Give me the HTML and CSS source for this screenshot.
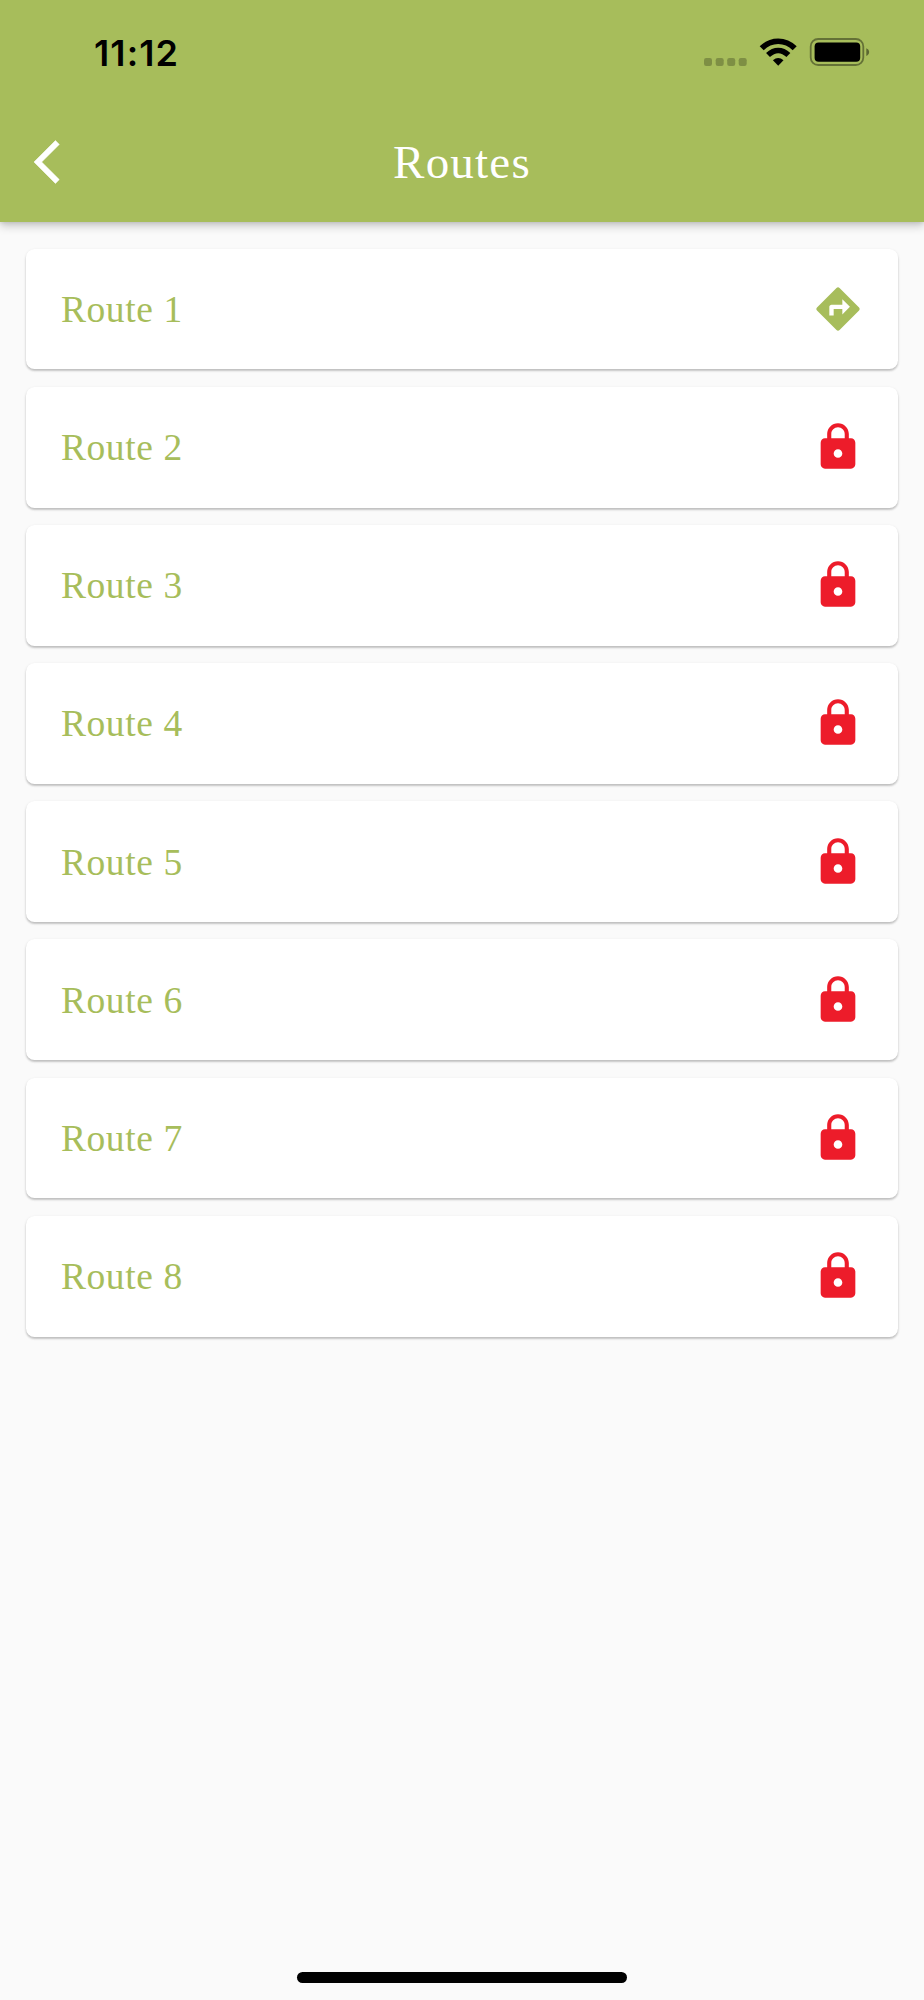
FILE: index.html
```html
<!DOCTYPE html>
<html lang="en">
<head>
<meta charset="utf-8">
<title>Routes</title>
<link rel="stylesheet" href="styles.css">
</head>
<body>
<svg class="symbols" aria-hidden="true">
  <symbol id="lock" viewBox="0 0 24 24"><path d="M18 8h-1V6c0-2.760-2.240-5-5-5S7 3.240 7 6v2H6c-1.100 0-2 .9-2 2v10c0 1.100.9 2 2 2h12c1.100 0 2-.9 2-2V10c0-1.100-.9-2-2-2zm-6 9c-1.100 0-2-.9-2-2s.9-2 2-2 2 .9 2 2-.9 2-2 2zm3.100-9H8.900V6c0-1.710 1.390-3.100 3.100-3.100s3.100 1.390 3.100 3.100v2z"/></symbol>
  <symbol id="directions" viewBox="0 0 24 24"><path d="M21.710 11.290l-9-9c-.390-.390-1.020-.390-1.410 0l-9 9c-.390.390-.390 1.020 0 1.410l9 9c.390.390 1.020.390 1.410 0l9-9c.390-.380.390-1.010 0-1.410zM14 14.500V12h-4v3H8v-4c0-.550.450-1 1-1h5V7.500l3.500 3.500-3.500 3.500z"/></symbol>
</svg>
<div class="screen">
  <header class="header">
    <div class="status">
      <span class="time">11:12</span>
      <svg class="indicators" viewBox="0 0 170 32">
        <g opacity=".24"><rect x="4" y="22" width="8" height="8" rx="2.200"/><rect x="15.700" y="22" width="8" height="8" rx="2.200"/><rect x="27.200" y="22" width="8" height="8" rx="2.200"/><rect x="38.700" y="22" width="8" height="8" rx="2.200"/></g>
        <g fill="none" stroke="#000" stroke-width="5.700">
          <path d="M61.700 12.300C71.200 2.900 85.200 2.900 94.700 12.300"/>
          <path d="M68 19C74.300 13.100 82.100 13.100 88.400 19"/>
        </g>
        <path d="M72.900 24.300Q78.200 19.500 83.500 24.300L78.200 29.700Z"/>
        <rect x="110.700" y="3" width="52.600" height="26" rx="7.500" fill="none" stroke="#000" stroke-opacity=".4" stroke-width="1.800"/>
        <rect x="114.600" y="6.600" width="45.600" height="19.200" rx="4"/>
        <path d="M166.300 12.200C170.100 13.600 170.100 18.600 166.300 20Z" opacity=".45"/>
      </svg>
    </div>
    <div class="bar">
      <svg class="back" viewBox="0 0 24 24"><path d="M11.670 3.870L9.900 2.100 0 12l9.900 9.900 1.770-1.770L3.540 12z"/></svg>
      <h1 class="title">Routes</h1>
    </div>
  </header>
  <main class="list">
    <div class="card"><span class="name">Route 1</span><svg class="icon"><use href="#directions"/></svg></div>
    <div class="card"><span class="name">Route 2</span><svg class="icon locked"><use href="#lock"/></svg></div>
    <div class="card"><span class="name">Route 3</span><svg class="icon locked"><use href="#lock"/></svg></div>
    <div class="card"><span class="name">Route 4</span><svg class="icon locked"><use href="#lock"/></svg></div>
    <div class="card"><span class="name">Route 5</span><svg class="icon locked"><use href="#lock"/></svg></div>
    <div class="card"><span class="name">Route 6</span><svg class="icon locked"><use href="#lock"/></svg></div>
    <div class="card"><span class="name">Route 7</span><svg class="icon locked"><use href="#lock"/></svg></div>
    <div class="card"><span class="name">Route 8</span><svg class="icon locked"><use href="#lock"/></svg></div>
  </main>
  <footer class="home"><div class="home-pill"></div></footer>
</div>
</body>
</html>
```
FILE: styles.css
```css
* { box-sizing: border-box; }
body { margin: 0; background: #fafafa; }
.symbols { display: none; }
.screen {
  width: 924px;
  height: 2000px;
  display: flex;
  flex-direction: column;
  background: #fafafa;
  overflow: hidden;
}
.header {
  height: 222.400px;
  flex: none;
  background: #a7bd5b;
  box-shadow: 0 4px 9px rgba(0, 0, 0, .2), 0 1px 4px rgba(0, 0, 0, .1);
}
.status {
  height: 101.500px;
  padding: 30px 54px 0 94px;
  display: flex;
  justify-content: space-between;
  align-items: flex-start;
}
.time {
  margin-top: 1px;
  font: 600 36px/44px Inter, sans-serif;
  letter-spacing: 1.100px;
  color: #000;
}
.indicators { width: 170px; height: 32px; margin-top: 6px; }
.bar {
  height: 120.900px;
  padding: 0 34.400px;
  display: grid;
  grid-template-columns: 52px 1fr 52px;
  align-items: center;
}
.back { width: 52px; height: 52px; fill: #fff; stroke: #fff; stroke-width: .25; overflow: visible; }
.title {
  margin: 0;
  text-align: center;
  font: 400 47px/54px "Liberation Serif", serif;
  letter-spacing: 1.200px;
  color: #fff;
}
.list {
  flex: 1;
  padding: 26.200px 25.900px 0;
  display: flex;
  flex-direction: column;
  gap: 17.270px;
}
.card {
  height: 120.900px;
  flex: none;
  padding: 0 34.600px 0 35px;
  display: flex;
  align-items: center;
  justify-content: space-between;
  background: #fff;
  border-radius: 8.600px;
  box-shadow: 0 2px 2px rgba(0, 0, 0, .16), 0 1px 3px rgba(0, 0, 0, .12);
}
.name {
  padding-top: 2px;
  font: 400 37.500px/44px "Liberation Serif", serif;
  letter-spacing: .600px;
  color: #a7bd5b;
}
.icon { width: 52px; height: 52px; fill: #a7bd5b; }
.locked { fill: #ed1c2a; }
.home {
  flex: none;
  padding-bottom: 17.500px;
  display: flex;
  justify-content: center;
}
.home-pill { width: 330.500px; height: 11px; border-radius: 6px; background: #000; }
```
